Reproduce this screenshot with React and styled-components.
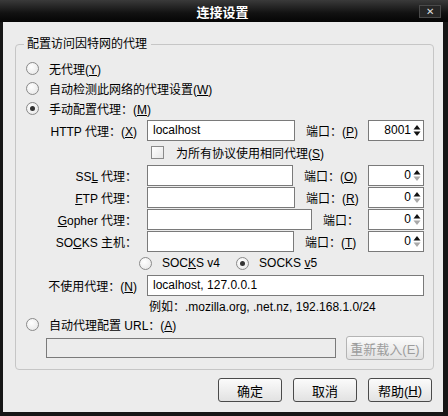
import React from "react";
import styled, { createGlobalStyle } from "styled-components";

const GlobalStyle = createGlobalStyle`
  html, body {
    margin: 0;
    padding: 0;
    background: #000;
  }
  body {
    font-family: "Liberation Sans", "Noto Sans CJK SC", sans-serif;
    font-size: 12px;
    color: #000;
  }
`;

const Window = styled.div`
  width: 448px;
  height: 416px;
  box-sizing: border-box;
  display: flex;
  flex-direction: column;
  background: #161616;
  padding: 0 5px 4px 3px;
`;

const TitleBar = styled.div`
  height: 22px;
  display: flex;
  align-items: center;
  margin: 0 -5px 0 -3px;
  padding: 0 7px 0 0;
  background: linear-gradient(#3a3a3a, #111 60%, #050505);
`;

const Title = styled.div`
  flex: 1;
  text-align: center;
  color: #fff;
  font-weight: bold;
  font-size: 13px;
  padding-left: 26px;
`;

const CloseButton = styled.div`
  width: 20px;
  height: 11px;
  border: 1px solid #4a4a4a;
  background: #262626;
  color: #ddd;
  font-size: 10px;
  line-height: 11px;
  text-align: center;
`;

const Body = styled.div`
  flex: 1;
  background: #ececec;
  display: flex;
  flex-direction: column;
  padding: 15px 10px 10px 12px;
`;

const Group = styled.fieldset`
  margin: 0;
  padding: 7px 9px 7px 10px;
  border: 1px solid #c6c6c6;
  border-radius: 4px;
  display: flex;
  flex-direction: column;
`;

const Legend = styled.legend`
  padding: 0 4px 0 3px;
  margin-left: -2px;
  line-height: 14px;
`;

const U = styled.span`
  text-decoration: underline;
`;

const RadioRow = styled.label`
  height: 20px;
  display: flex;
  align-items: center;
  gap: 10px;
`;

const RadioDot = styled.span`
  width: 11px;
  height: 11px;
  border-radius: 50%;
  border: 1px solid #8a8a8a;
  background: radial-gradient(circle at 40% 35%, #fff, #e4e4e4);
  display: flex;
  align-items: center;
  justify-content: center;
  &::after {
    content: "";
    width: 5px;
    height: 5px;
    border-radius: 50%;
    background: ${({ $checked }) => ($checked ? "#333" : "transparent")};
  }
`;

const Radio = ({ checked, children }) => (
  <RadioRow>
    <RadioDot $checked={checked} />
    <span>{children}</span>
  </RadioRow>
);

const ProxyRow = styled.div`
  height: 22px;
  display: flex;
  align-items: center;
  margin-top: ${({ $top }) => $top || 0}px;
`;

const FieldLabel = styled.div`
  width: 111px;
  margin-right: 10px;
  text-align: right;
  white-space: nowrap;
`;

const TextBox = styled.div`
  box-sizing: border-box;
  width: ${({ $w }) => ($w ? `${$w}px` : "auto")};
  flex: ${({ $w }) => ($w ? "none" : 1)};
  height: ${({ $h }) => $h || 21}px;
  border: 1px solid #7a7a7a;
  background: ${({ $disabled }) => ($disabled ? "#ececec" : "#fff")};
  padding: 0 5px;
  display: flex;
  align-items: center;
  white-space: nowrap;
`;

const PortLabel = styled.div`
  flex: 1;
  margin-left: 11px;
  white-space: nowrap;
`;

const SpinBox = styled.div`
  box-sizing: border-box;
  width: 56px;
  height: 21px;
  border: 1px solid #7a7a7a;
  background: #fff;
  display: flex;
  align-items: center;
  justify-content: flex-end;
  padding-right: 2px;
  gap: 2px;
`;

const Arrows = styled.svg`
  width: 8px;
  height: 13px;
`;

const Spin = ({ value, min }) => (
  <SpinBox>
    <span>{value}</span>
    <Arrows viewBox="0 0 8 13">
      <path d="M4 1 L7.5 5.5 H0.5 Z" fill="#111" />
      <path d="M4 12 L7.5 7.5 H0.5 Z" fill={min ? "#a8a8a8" : "#111"} />
    </Arrows>
  </SpinBox>
);

const CheckRow = styled.label`
  height: 23px;
  display: flex;
  align-items: center;
  gap: 12px;
  padding-left: 125px;
`;

const CheckBox = styled.span`
  width: 11px;
  height: 11px;
  border: 1px solid #8a8a8a;
  background: linear-gradient(135deg, #fff, #e6e6e6);
`;

const SocksRow = styled.div`
  height: 22px;
  display: flex;
  align-items: center;
  gap: 16px;
  padding-left: 113px;
`;

const Hint = styled.div`
  height: 18px;
  display: flex;
  align-items: center;
  padding-left: 123px;
`;

const UrlRow = styled.div`
  height: 28px;
  display: flex;
  align-items: center;
  gap: 10px;
  padding-left: 20px;
`;

const Button = styled.div`
  box-sizing: border-box;
  width: ${({ $w }) => $w || 64}px;
  height: 24px;
  border: 1px solid ${({ $disabled }) => ($disabled ? "#b4b4b4" : "#4a4a4a")};
  border-radius: 3px;
  background: linear-gradient(#fbfbfb, #e2e2e2);
  color: ${({ $disabled }) => ($disabled ? "#9c9c9c" : "#000")};
  display: flex;
  align-items: center;
  justify-content: center;
  font-size: 13px;
`;

const Footer = styled.div`
  margin-top: auto;
  display: flex;
  justify-content: flex-end;
  gap: 11px;
  margin-right: 1px;
`;

const otherRows = [
  { label: <>SS<U>L</U> 代理：</>, w: 146, port: <>端口：(<U>O</U>)</> },
  { label: <><U>F</U>TP 代理：</>, w: 148, port: <>端口：(<U>R</U>)</> },
  { label: <><U>G</U>opher 代理：</>, w: 165, port: <>端口：</> },
  { label: <>SO<U>C</U>KS 主机：</>, w: 147, port: <>端口：(<U>T</U>)</> },
];

export default function App() {
  return (
    <>
      <GlobalStyle />
      <Window>
        <TitleBar>
          <Title>连接设置</Title>
          <CloseButton>✕</CloseButton>
        </TitleBar>
        <Body>
          <Group>
            <Legend>配置访问因特网的代理</Legend>
            <Radio>无代理(<U>Y</U>)</Radio>
            <Radio>自动检测此网络的代理设置(<U>W</U>)</Radio>
            <Radio checked>手动配置代理：(<U>M</U>)</Radio>
            <ProxyRow $top={1}>
              <FieldLabel>HTTP 代理：(<U>X</U>)</FieldLabel>
              <TextBox $w={148}>localhost</TextBox>
              <PortLabel>端口：(<U>P</U>)</PortLabel>
              <Spin value={8001} />
            </ProxyRow>
            <CheckRow>
              <CheckBox />
              <span>为所有协议使用相同代理(<U>S</U>)</span>
            </CheckRow>
            {otherRows.map((r, i) => (
              <ProxyRow key={i}>
                <FieldLabel>{r.label}</FieldLabel>
                <TextBox $w={r.w} />
                <PortLabel>{r.port}</PortLabel>
                <Spin value={0} min />
              </ProxyRow>
            ))}
            <SocksRow>
              <Radio>SOC<U>K</U>S v4</Radio>
              <Radio checked>SOCKS <U>v</U>5</Radio>
            </SocksRow>
            <ProxyRow>
              <FieldLabel>不使用代理：(<U>N</U>)</FieldLabel>
              <TextBox>localhost, 127.0.0.1</TextBox>
            </ProxyRow>
            <Hint>例如：.mozilla.org, .net.nz, 192.168.1.0/24</Hint>
            <Radio>自动代理配置 URL：(<U>A</U>)</Radio>
            <UrlRow>
              <TextBox $w={290} $h={20} $disabled />
              <Button $w={78} $disabled>重新载入(E)</Button>
            </UrlRow>
          </Group>
          <Footer>
            <Button>确定</Button>
            <Button>取消</Button>
            <Button>帮助(<U>H</U>)</Button>
          </Footer>
        </Body>
      </Window>
    </>
  );
}
